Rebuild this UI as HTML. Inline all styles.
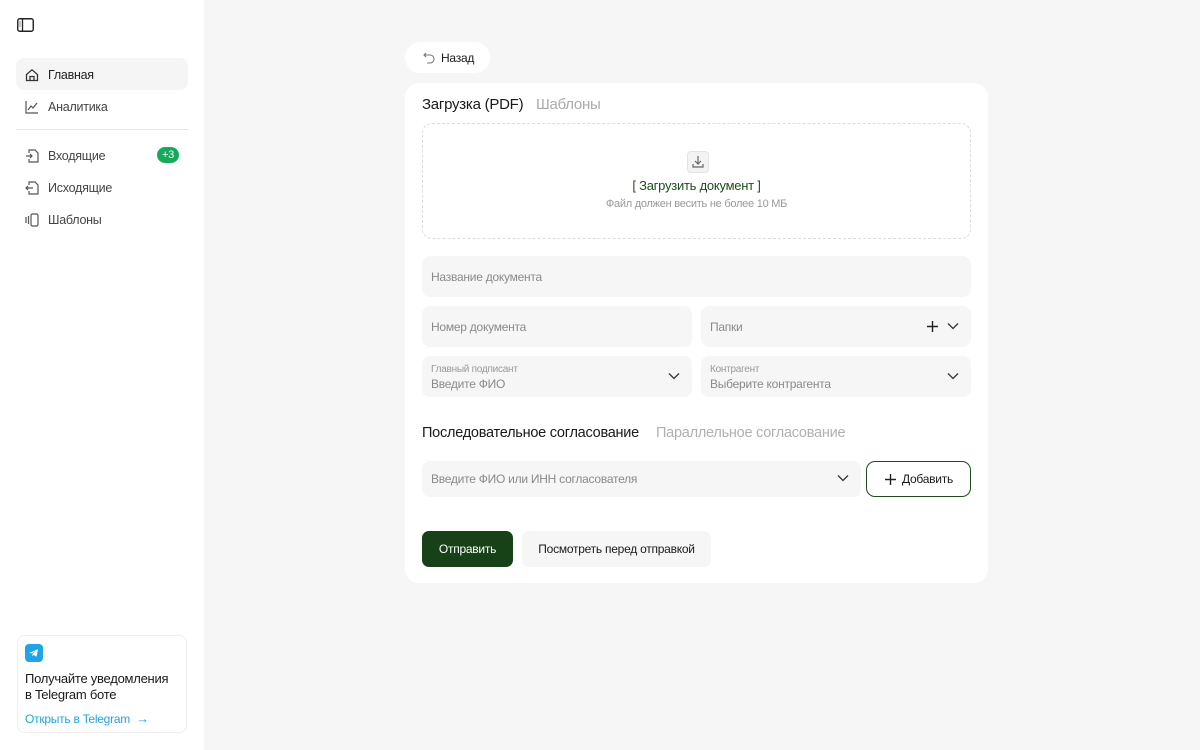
<!DOCTYPE html>
<html><head><meta charset="utf-8"><style>
*{box-sizing:border-box;margin:0;padding:0}
body{width:1200px;height:750px;overflow:hidden;background:#f6f6f6;font-family:"Liberation Sans",sans-serif;color:#1a1a1a;position:relative;letter-spacing:-0.25px}
.side{position:absolute;left:0;top:0;width:204px;height:750px;background:#fff}
.abs{position:absolute}
.nav{position:absolute;left:16px;width:172px;height:32px;border-radius:8px;display:flex;align-items:center;padding-left:9px;font-size:12.5px;color:#444}
.nav svg{margin-right:9px}
.card{position:absolute;left:405px;top:83px;width:583px;height:500px;background:#fff;border-radius:14px}
.field{position:absolute;background:#f6f6f6;border-radius:8px;font-size:12px;color:#8a8a8a;padding-left:9px;display:flex;align-items:center}
.small{font-size:10px;color:#999}
.chev{position:absolute;right:12px;top:50%;margin-top:-5px}
</style></head><body>
<div class="side">
 <svg class="abs" style="left:17px;top:18px" width="17" height="14" viewBox="0 0 17 14"><rect x="0.75" y="0.75" width="15.5" height="12.5" rx="2" fill="none" stroke="#222" stroke-width="1.4"/><line x1="5.5" y1="1" x2="5.5" y2="13" stroke="#222" stroke-width="1.3"/><path d="M2.5 4h1M2.5 6h1M2.5 8h1" stroke="#222" stroke-width="1"/></svg>
 <div class="nav" style="top:58px;background:#f5f5f5;color:#222;padding-top:2px"><svg width="14" height="14" viewBox="0 0 14 14" fill="none" stroke="#333" stroke-width="1.3"><path d="M1.5 6.5L7 1.8l5.5 4.7V12.5h-11z"/><path d="M5 12.5V8.5h4v4"/></svg>Главная</div>
 <div class="nav" style="top:90px;padding-top:2px"><svg width="14" height="14" viewBox="0 0 14 14" fill="none" stroke="#555" stroke-width="1.2"><path d="M1 1v12h12"/><path d="M3 10l3-4 2 2 4-5"/></svg>Аналитика</div>
 <div class="abs" style="left:16px;top:129px;width:172px;height:1px;background:#e6e6e6"></div>
 <div class="nav" style="top:139px;padding-top:2px"><svg width="14" height="14" viewBox="0 0 14 14" fill="none" stroke="#555" stroke-width="1.2"><path d="M4 4V1h6l3 3v9H4v-3"/><path d="M1 7h6M5 5l2 2-2 2"/></svg>Входящие<span style="position:absolute;right:9px;top:8px;background:#14a95c;color:#fff;font-size:11px;border-radius:9px;padding:2px 5px 0;height:16px">+3</span></div>
 <div class="nav" style="top:171px;padding-top:2px"><svg width="14" height="14" viewBox="0 0 14 14" fill="none" stroke="#555" stroke-width="1.2"><path d="M4 4V1h6l3 3v9H4v-3"/><path d="M8 7H1M3 5L1 7l2 2"/></svg>Исходящие</div>
 <div class="nav" style="top:203px;padding-top:2px"><svg width="14" height="14" viewBox="0 0 14 14" fill="none" stroke="#555" stroke-width="1.2"><rect x="6" y="1" width="7" height="12" rx="1.5"/><path d="M1 4v6M3.5 3v8"/></svg>Шаблоны</div>
 <div class="abs" style="left:17px;top:635px;width:170px;height:98px;border:1px solid #eee;border-radius:8px">
  <div class="abs" style="left:7px;top:8px;width:18px;height:18px;background:#1ea4e9;border-radius:4px"><svg width="18" height="18" viewBox="0 0 18 18"><path d="M4.5 8.8l8.5-3.5-1.6 7.6-2.7-2-1.3 1.3v-2.2l3.6-3.3-4.5 2.8z" fill="#fff"/></svg></div>
  <div class="abs" style="left:7px;top:35px;font-size:13px;line-height:16px;color:#1a1a1a">Получайте уведомления<br>в Telegram боте</div>
  <div class="abs" style="left:7px;top:75px;font-size:12px;color:#1ea4e9">Открыть в Telegram <span style="margin-left:3px;font-size:13px">→</span></div>
 </div>
</div>
<div class="abs" style="left:405px;top:42px;width:85px;height:31px;background:#fff;border-radius:16px;font-size:12px;display:flex;align-items:center;padding-left:18px;padding-top:1px"><svg width="12" height="12" viewBox="0 0 12 12" fill="none" stroke="#777" stroke-width="1.1" style="margin-right:6px"><path d="M3 1L1 3l2 2"/><path d="M1 3h6a4 4 0 010 8H4"/></svg>Назад</div>
<div class="card">
 <div class="abs" style="left:17px;top:13px;font-size:15px;color:#1a1a1a">Загрузка (PDF)</div>
 <div class="abs" style="left:131px;top:13px;font-size:15px;color:#aaa">Шаблоны</div>
 <div class="abs" style="left:17px;top:40px;width:549px;height:116px;border:1px dashed #dcdcdc;border-radius:10px">
  <div class="abs" style="left:264px;top:27px;width:22px;height:22px;background:#f3f3f3;border:1px solid #e4e4e4;border-radius:4px"><svg width="20" height="20" viewBox="0 0 20 20" fill="none" stroke="#666" stroke-width="1.2"><path d="M10 4v8M7 9l3 3 3-3M5 12v3h10v-3"/></svg></div>
  <div class="abs" style="left:0;width:100%;top:54px;text-align:center;font-size:13px;color:#1e4d1e">[ Загрузить документ ]</div>
  <div class="abs" style="left:0;width:100%;top:74px;text-align:center;font-size:11px;color:#999">Файл должен весить не более 10 МБ</div>
 </div>
 <div class="field" style="left:17px;top:173px;width:549px;height:41px">Название документа</div>
 <div class="field" style="left:17px;top:223px;width:270px;height:41px">Номер документа</div>
 <div class="field" style="left:296px;top:223px;width:270px;height:41px">Папки
  <svg class="abs" style="right:32px;top:14px" width="13" height="13" viewBox="0 0 13 13" stroke="#222" stroke-width="1.4"><path d="M6.5 1v11M1 6.5h11"/></svg>
  <svg class="chev" width="12" height="8" viewBox="0 0 12 8" fill="none" stroke="#333" stroke-width="1.3"><path d="M1 1.5l5 5 5-5"/></svg></div>
 <div class="field" style="left:17px;top:273px;width:270px;height:41px;display:block;padding-top:8px"><div class="small">Главный подписант</div><div style="margin-top:2px">Введите ФИО</div><svg class="chev" width="12" height="8" viewBox="0 0 12 8" fill="none" stroke="#333" stroke-width="1.3"><path d="M1 1.5l5 5 5-5"/></svg></div>
 <div class="field" style="left:296px;top:273px;width:270px;height:41px;display:block;padding-top:8px"><div class="small">Контрагент</div><div style="margin-top:2px">Выберите контрагента</div><svg class="chev" width="12" height="8" viewBox="0 0 12 8" fill="none" stroke="#333" stroke-width="1.3"><path d="M1 1.5l5 5 5-5"/></svg></div>
 <div class="abs" style="left:17px;top:342px;font-size:14.5px;color:#1a1a1a">Последовательное согласование</div>
 <div class="abs" style="left:251px;top:342px;font-size:14.5px;color:#b0b0b0">Параллельное согласование</div>
 <div class="field" style="left:17px;top:378px;width:439px;height:36px">Введите ФИО или ИНН согласователя<svg class="chev" width="12" height="8" viewBox="0 0 12 8" fill="none" stroke="#333" stroke-width="1.3"><path d="M1 1.5l5 5 5-5"/></svg></div>
 <div class="abs" style="left:461px;top:378px;width:105px;height:36px;border:1.3px solid #1e4d1e;border-radius:9px;font-size:12px;display:flex;align-items:center;justify-content:center"><svg width="13" height="13" viewBox="0 0 13 13" stroke="#222" stroke-width="1.4" style="margin-right:5px"><path d="M6.5 1v11M1 6.5h11"/></svg>Добавить</div>
 <div class="abs" style="left:17px;top:448px;width:91px;height:36px;background:#174117;border-radius:7px;color:#fff;font-size:12px;display:flex;align-items:center;justify-content:center">Отправить</div>
 <div class="abs" style="left:117px;top:448px;width:189px;height:36px;background:#f6f6f6;border-radius:7px;font-size:12px;display:flex;align-items:center;justify-content:center">Посмотреть перед отправкой</div>
</div>
</body></html>
